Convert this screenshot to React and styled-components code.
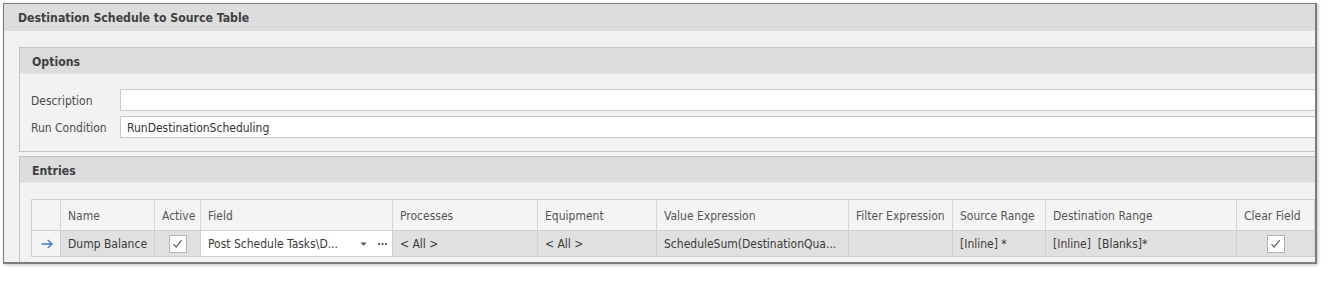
import React from "react";
import styled, { createGlobalStyle } from "styled-components";

const Global = createGlobalStyle`
  html, body { margin: 0; padding: 0; background: #ffffff; }
  body { font-family: "DejaVu Sans Condensed", "DejaVu Sans", sans-serif; font-stretch: condensed; }
`;

const Page = styled.div`
  width: 1333px;
  height: 281px;
  padding: 3px 0 0 3px;
  box-sizing: border-box;
`;

const Frame = styled.div`
  width: 1314px;
  height: 261px;
  box-sizing: border-box;
  border: 1px solid #7c7c7c;
  border-right-width: 2px;
  border-bottom-width: 2px;
  box-shadow: 1px 1px 3px rgba(0, 0, 0, 0.25);
  background: #f1f1f1;
  overflow: hidden;
  display: flex;
  flex-direction: column;
`;

const TitleBar = styled.div`
  height: 27px;
  flex: none;
  background: #dddddd;
  display: flex;
  align-items: center;
  padding: 1px 0 0 14px;
  box-sizing: border-box;
  font-size: 12.2px;
  font-weight: bold;
  color: #404040;
`;

const Body = styled.div`
  padding: 16px 0 0 15px;
  display: flex;
  flex-direction: column;
  gap: 4px;
  width: 1330px;
`;

const Panel = styled.div`
  border: 1px solid #c4c4c4;
  background: #f2f2f2;
`;

const PanelHeader = styled.div`
  height: 26px;
  background: #dcdcdc;
  border-bottom: 1px solid #e6e6e6;
  display: flex;
  align-items: center;
  padding: 2px 0 0 12px;
  box-sizing: border-box;
  font-size: 12.2px;
  font-weight: bold;
  color: #404040;
`;

const OptionsBody = styled.div`
  padding: 15px 0 13px 11px;
  display: flex;
  flex-direction: column;
  gap: 5px;
`;

const FieldRow = styled.div`
  display: grid;
  grid-template-columns: 89px 1fr;
  align-items: center;
  height: 22px;
`;

const Label = styled.span`
  font-size: 12px;
  color: #4a4a4a;
  padding-top: 1px;
`;

const Input = styled.div`
  height: 22px;
  box-sizing: border-box;
  background: #ffffff;
  border: 1px solid #c8c8c8;
  display: flex;
  align-items: center;
  padding: 1px 0 0 6px;
  font-size: 12px;
  color: #333333;
`;

const EntriesBody = styled.div`
  padding: 16px 0 10px 11px;
`;

const COLS = "29px 94px 46px 192px 145px 119px 192px 104px 93px 191px 78px";

const Grid = styled.div`
  width: 1283px;
  border-left: 1px solid #cfcfcf;
  border-top: 1px solid #cfcfcf;
`;

const Row = styled.div`
  display: grid;
  grid-template-columns: ${COLS};
  height: ${(p) => p.$h}px;
`;

const Cell = styled.div`
  box-sizing: border-box;
  border-right: 1px solid ${(p) => (p.$head ? "#d6d6d6" : "#cfcfcf")};
  border-bottom: 1px solid #cfcfcf;
  background: ${(p) => p.$bg};
  display: flex;
  align-items: center;
  justify-content: ${(p) => (p.$center ? "center" : "flex-start")};
  padding: 1px ${(p) => (p.$center ? 0 : 7)}px 0;
  font-size: 12px;
  color: ${(p) => (p.$head ? "#555555" : "#3a3a3a")};
  white-space: nowrap;
  overflow: hidden;
`;

const CellText = styled.span`
  flex: 1;
  overflow: hidden;
`;

const Check = styled.div`
  width: 18px;
  height: 18px;
  box-sizing: border-box;
  background: #ffffff;
  border: 1px solid #b4b4b4;
  display: flex;
  align-items: center;
  justify-content: center;
`;

const EditorIcons = styled.span`
  display: flex;
  align-items: center;
  gap: 11px;
  margin-right: -2px;
`;

const ArrowIcon = () => (
  <svg width="12" height="10" viewBox="0 0 12 10" style={{ marginLeft: 2 }}>
    <path d="M0.5 5 H11 M6.8 1 L11 5 L6.8 9" fill="none" stroke="#3b7bd4" strokeWidth="1.3" />
  </svg>
);

const CheckMark = () => (
  <svg width="11" height="10" viewBox="0 0 11 10">
    <path d="M1.5 5.2 L4.2 8.2 L9.6 1.2" fill="none" stroke="#555" strokeWidth="1.1" />
  </svg>
);

const DropArrow = () => (
  <svg width="7" height="4" viewBox="0 0 7 4">
    <path d="M0.5 0.5 H6.5 L3.5 3.8 Z" fill="#555" />
  </svg>
);

const Dots = () => (
  <svg width="9" height="2" viewBox="0 0 9 2">
    <rect x="0" y="0" width="2" height="2" fill="#666" />
    <rect x="3.5" y="0" width="2" height="2" fill="#666" />
    <rect x="7" y="0" width="2" height="2" fill="#666" />
  </svg>
);

const headers = [
  "",
  "Name",
  "Active",
  "Field",
  "Processes",
  "Equipment",
  "Value Expression",
  "Filter Expression",
  "Source Range",
  "Destination Range",
  "Clear Field",
];

const HEAD_BG = "#f4f4f4";
const ROW_BG = "#e0e0e0";

export default function App() {
  return (
    <Page>
      <Global />
      <Frame>
        <TitleBar>Destination Schedule to Source Table</TitleBar>
        <Body>
          <Panel>
            <PanelHeader>Options</PanelHeader>
            <OptionsBody>
              <FieldRow>
                <Label>Description</Label>
                <Input />
              </FieldRow>
              <FieldRow>
                <Label>Run Condition</Label>
                <Input>RunDestinationScheduling</Input>
              </FieldRow>
            </OptionsBody>
          </Panel>
          <Panel>
            <PanelHeader>Entries</PanelHeader>
            <EntriesBody>
              <Grid>
                <Row $h={31}>
                  {headers.map((h, i) => (
                    <Cell key={i} $head $bg={HEAD_BG}>
                      {h}
                    </Cell>
                  ))}
                </Row>
                <Row $h={26}>
                  <Cell $bg={HEAD_BG} $center>
                    <ArrowIcon />
                  </Cell>
                  <Cell $bg={ROW_BG}>Dump Balance</Cell>
                  <Cell $bg={ROW_BG} $center>
                    <Check>
                      <CheckMark />
                    </Check>
                  </Cell>
                  <Cell $bg="#ffffff">
                    <CellText>Post Schedule Tasks\D...</CellText>
                    <EditorIcons>
                      <DropArrow />
                      <Dots />
                    </EditorIcons>
                  </Cell>
                  <Cell $bg={ROW_BG}>{"< All >"}</Cell>
                  <Cell $bg={ROW_BG}>{"< All >"}</Cell>
                  <Cell $bg={ROW_BG}>ScheduleSum(DestinationQua...</Cell>
                  <Cell $bg={ROW_BG}></Cell>
                  <Cell $bg={ROW_BG}>[Inline] *</Cell>
                  <Cell $bg={ROW_BG}>[Inline]&nbsp;&nbsp;[Blanks]*</Cell>
                  <Cell $bg={ROW_BG} $center>
                    <Check>
                      <CheckMark />
                    </Check>
                  </Cell>
                </Row>
              </Grid>
            </EntriesBody>
          </Panel>
        </Body>
      </Frame>
    </Page>
  );
}
